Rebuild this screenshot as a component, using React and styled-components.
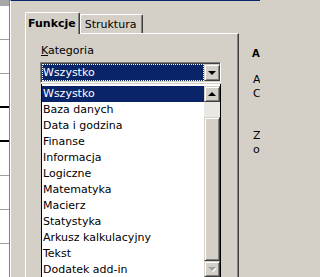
import React from 'react';
import styled, { createGlobalStyle } from 'styled-components';

const GlobalStyle = createGlobalStyle`
  html, body { margin: 0; padding: 0; }
  body {
    font-family: "DejaVu Sans", Verdana, sans-serif;
    font-size: 11px;
    background: #d4d0c8;
    color: #000;
  }
`;

const Screen = styled.div`
  display: flex;
  width: 260px;
  height: 277px;
  overflow: hidden;
`;

const Sheet = styled.div`
  flex: none;
  width: 9px;
  background: #fff;
  border-right: 1px solid #808080;
`;

const SheetHead = styled.div`
  height: 6px;
  background: #a8a8a8;
`;

const SheetRow = styled.div`
  box-sizing: border-box;
  height: 34px;
  border-bottom: ${p => (p.$mark ? '2px solid #000' : '1px solid #a0a0a0')};
`;

const Dialog = styled.div`
  flex: 1;
  min-width: 0;
  display: flex;
  border-top: 1px solid #0a246a;
  border-left: 1px solid #fff;
  padding: 11px 0 0 14px;
`;

const TabArea = styled.div`
  flex: none;
  width: 214px;
  display: flex;
  flex-direction: column;
`;

const TabStrip = styled.div`
  display: flex;
  align-items: flex-end;
  height: 21px;
  position: relative;
  z-index: 1;
`;

const Tab = styled.div`
  box-sizing: border-box;
  display: flex;
  align-items: center;
  height: ${p => (p.$active ? '22px' : '19px')};
  margin-bottom: ${p => (p.$active ? '-1px' : '0')};
  padding: ${p => (p.$active ? '0 3px 0 2px' : '0 6px 0 4px')};
  background: #d4d0c8;
  border-top: 1px solid #fff;
  border-left: 1px solid #fff;
  border-right: 1px solid #404040;
  box-shadow: inset -1px 0 #808080;
  border-top-left-radius: 2px;
  border-top-right-radius: 2px;
  font-weight: ${p => (p.$active ? 'bold' : 'normal')};
  white-space: nowrap;
`;

const Panel = styled.div`
  flex: 1;
  border-top: 1px solid #fff;
  border-left: 1px solid #fff;
  border-right: 1px solid #404040;
  box-shadow: inset -1px 0 #808080;
  padding: 10px 0 0 14px;
`;

const Label = styled.div`
  line-height: 13px;
  margin-left: 1px;
  u { text-decoration: underline; }
`;

const Combo = styled.div`
  position: relative;
  box-sizing: border-box;
  display: flex;
  width: 181px;
  height: 21px;
  margin-top: 5px;
  padding: 1px 0 1px 1px;
  background: #fff;
  border: 1px solid;
  border-color: #808080 #fff #fff #808080;
  box-shadow: inset 1px 1px #404040, inset -1px -1px #d4d0c8;
`;

const ComboValue = styled.div`
  flex: 1;
  background: #0a246a;
  color: #fff;
  line-height: 17px;
  padding-left: 1px;
  outline: 1px dotted #fff;
  outline-offset: -1px;
`;

const RaisedButton = styled.div`
  box-sizing: border-box;
  flex: none;
  width: 16px;
  height: ${p => p.$h || 16}px;
  display: flex;
  align-items: center;
  justify-content: center;
  background: #d4d0c8;
  border: 1px solid;
  border-color: #d4d0c8 #404040 #404040 #d4d0c8;
  box-shadow: inset 1px 1px #fff, inset -1px -1px #808080;
`;

const Arrow = styled.span`
  width: 0;
  height: 0;
  border-left: 4px solid transparent;
  border-right: 4px solid transparent;
  ${p => (p.$up ? 'border-bottom' : 'border-top')}: 4px solid ${p => (p.$disabled ? '#a0a0a0' : '#000')};
  ${p => p.$disabled && 'filter: drop-shadow(1px 1px 0 #fff);'}
`;

const Popup = styled.div`
  position: absolute;
  top: calc(100% + 2px);
  left: 0;
  width: 180px;
  height: 193px;
  box-sizing: border-box;
  display: flex;
  padding-top: 2px;
  background: #fff;
  border-left: 1px solid #000;
  border-right: 1px solid #000;
  z-index: 2;
`;

const List = styled.div`
  flex: 1;
`;

const Item = styled.div`
  height: 16px;
  line-height: 16px;
  padding-left: 1px;
  white-space: nowrap;
  background: ${p => (p.$selected ? '#0a246a' : 'transparent')};
  color: ${p => (p.$selected ? '#fff' : '#000')};
`;

const ScrollBar = styled.div`
  flex: none;
  width: 16px;
  display: flex;
  flex-direction: column;
`;

const Track = styled.div`
  height: 15px;
  background: #eae8e4;
`;

const Thumb = styled(RaisedButton)`
  flex: 1;
  height: auto;
`;

const Info = styled.div`
  flex: 1;
  min-width: 0;
  overflow: hidden;
  padding-left: 14px;
  white-space: nowrap;
`;

const InfoLine = styled.div`
  line-height: 14px;
  margin-top: ${p => p.$gap || 0}px;
  ${p => p.$bold && 'font-weight: bold; font-size: 10px; margin-left: -1px;'}
`;

const categories = [
  'Wszystko',
  'Baza danych',
  'Data i godzina',
  'Finanse',
  'Informacja',
  'Logiczne',
  'Matematyka',
  'Macierz',
  'Statystyka',
  'Arkusz kalkulacyjny',
  'Tekst',
  'Dodatek add-in',
];

const sheetRows = [false, false, true, true, false, false, false, false];

export default function App() {
  return (
    <Screen>
      <GlobalStyle />
      <Sheet>
        <SheetHead />
        {sheetRows.map((mark, i) => (
          <SheetRow key={i} $mark={mark} />
        ))}
      </Sheet>
      <Dialog>
        <TabArea>
          <TabStrip>
            <Tab $active>Funkcje</Tab>
            <Tab>Struktura</Tab>
          </TabStrip>
          <Panel>
            <Label>
              <u>K</u>ategoria
            </Label>
            <Combo>
              <ComboValue>Wszystko</ComboValue>
              <RaisedButton $h={17}>
                <Arrow />
              </RaisedButton>
              <Popup>
                <List>
                  {categories.map((c, i) => (
                    <Item key={c} $selected={i === 0}>
                      {c}
                    </Item>
                  ))}
                </List>
                <ScrollBar>
                  <RaisedButton>
                    <Arrow $up />
                  </RaisedButton>
                  <Track />
                  <Thumb />
                  <RaisedButton>
                    <Arrow $disabled />
                  </RaisedButton>
                </ScrollBar>
              </Popup>
            </Combo>
          </Panel>
        </TabArea>
        <Info>
          <InfoLine $bold $gap={35}>A</InfoLine>
          <InfoLine $gap={12}>A</InfoLine>
          <InfoLine>C</InfoLine>
          <InfoLine $gap={28}>Z</InfoLine>
          <InfoLine>o</InfoLine>
        </Info>
      </Dialog>
    </Screen>
  );
}
